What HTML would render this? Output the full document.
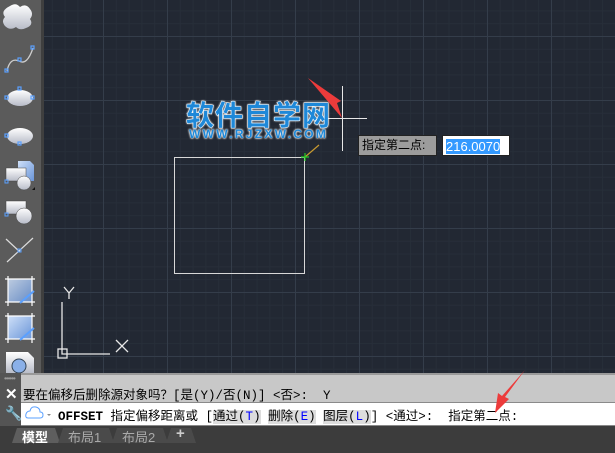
<!DOCTYPE html>
<html><head><meta charset="utf-8"><style>
*{margin:0;padding:0;box-sizing:border-box}
body{width:615px;height:453px;overflow:hidden;position:relative;background:#222833;font-family:"Liberation Sans","Noto Sans CJK SC",sans-serif}
#canvas{position:absolute;left:44px;top:0;width:571px;height:373px;background-color:#222833;
background-image:
linear-gradient(to right,#343d4a 1px,transparent 1px),
linear-gradient(to bottom,#343d4a 1px,transparent 1px),
linear-gradient(to right,#272e39 1px,transparent 1px),
linear-gradient(to bottom,#272e39 1px,transparent 1px);
background-size:64px 64px,64px 64px,12.8px 12.8px,12.8px 12.8px;
background-position:59px 36px,59px 36px,59px 36px,59px 36px}
#tb{position:absolute;left:0;top:0;width:44px;height:373px;background:#5b5b5b;border-right:3px solid #3f3f3f}
.cmd{position:absolute;left:0;width:615px}
.t{position:absolute;white-space:nowrap}
.m{font-family:"Liberation Mono","Noto Sans CJK SC",monospace;font-size:12.5px;color:#000}
</style></head><body>
<div id="canvas"></div>
<div id="tb">
<svg width="41" height="373" viewBox="0 0 41 373">
<defs><linearGradient id="g" x1="0" y1="0" x2="0" y2="1"><stop offset="0" stop-color="#fff"/><stop offset="1" stop-color="#b8bcc8"/></linearGradient>
<linearGradient id="b" x1="0" y1="0" x2="1" y2="1"><stop offset="0" stop-color="#cfe0f8"/><stop offset="1" stop-color="#6a95d8"/></linearGradient></defs>
<path d="M10 6 q6-4 10 1 q6-4 10 2 q4 5 0 10 q4 6-4 9 q-6 3-10-1 q-6 4-11-1 q-4-5 0-9 q-5-6 5-11z" fill="url(#g)"/>
<path d="M7 71 q3-14 12-10 q8 5 14-13" stroke="#ccc" fill="none" stroke-width="1.3"/>
<g fill="none" stroke="#5aa0ff" stroke-width="1.2"><rect x="5" y="69" width="3" height="3"/><rect x="18" y="58" width="3" height="3"/><rect x="31" y="46" width="3" height="3"/></g>
<ellipse cx="20" cy="98" rx="13" ry="8" fill="url(#g)"/>
<g fill="none" stroke="#5aa0ff" stroke-width="1.2"><rect x="5" y="96" width="3" height="3"/><rect x="18" y="87" width="3" height="3"/><rect x="31" y="96" width="3" height="3"/></g>
<ellipse cx="20" cy="136" rx="13" ry="8" fill="url(#g)"/>
<g fill="none" stroke="#5aa0ff" stroke-width="1.2"><rect x="5" y="134" width="3" height="3"/><rect x="18" y="142" width="3" height="3"/></g>
<path d="M18 161h12l4 4v16h-16z" fill="url(#b)"/>
<rect x="6" y="168" width="20" height="13" fill="url(#g)" stroke="#444" stroke-width=".5"/>
<circle cx="24" cy="183" r="7" fill="url(#g)" stroke="#444" stroke-width=".5"/>
<rect x="5" y="180" width="3" height="3" fill="none" stroke="#5aa0ff"/>
<path d="M32 190l3-3v3z" fill="#111"/>
<rect x="6" y="201" width="20" height="13" fill="url(#g)" stroke="#444" stroke-width=".5"/>
<circle cx="24" cy="216" r="8" fill="url(#g)" stroke="#444" stroke-width=".5"/>
<rect x="5" y="213" width="3" height="3" fill="none" stroke="#5aa0ff"/>
<path d="M7 262l26-24" stroke="#ddd" stroke-width="1.2"/><path d="M6 239l14 13" stroke="#ddd" stroke-width="1.2"/>
<rect x="18" y="249" width="3" height="3" fill="none" stroke="#5aa0ff"/>
<rect x="8" y="279" width="24" height="23" fill="url(#b)" opacity=".85"/>
<path d="M5 279h30M5 302h30M8 276v30M32 276v30" stroke="#fff" stroke-width="1.2"/><path d="M20 303l14-12" stroke="#5aa0ff" stroke-width="2"/>
<rect x="8" y="316" width="24" height="23" fill="url(#b)"/>
<path d="M5 316h30M5 339h30M8 313v30M32 313v30" stroke="#fff" stroke-width="1.2"/><path d="M20 340l14-12" stroke="#5aa0ff" stroke-width="2"/>
<path d="M6 352h22l6 6v15h-28z" fill="url(#g)"/><circle cx="19" cy="366" r="7" fill="#8ab0e8" stroke="#345"/>
</svg></div>

<svg style="position:absolute;left:0;top:0" width="615" height="373">
<rect x="174.5" y="157.5" width="130" height="116" fill="none" stroke="#d8d8d8"/>
<path d="M305 157l14-12" stroke="#c89a30" stroke-width="1.2"/>
<path d="M301 157h8M305 153v8" stroke="#2c2" stroke-width="1.2"/>
<path d="M342.5 86v65M318 118.5h49" stroke="#e8e8e8"/>
<path d="M62 302v52h48" stroke="#e8e8e8" stroke-width="1.3" fill="none"/>
<rect x="58" y="349" width="9" height="9" fill="none" stroke="#e8e8e8" stroke-width="1.3"/>
<path d="M64 287l5 6 5-6M69 293v6M116 340l12 12M128 340l-12 12" stroke="#e8e8e8" stroke-width="1.3" fill="none"/>
<path d="M308 78l34 40-5-15 4-2z" fill="#ec3b3b"/>
</svg>
<div class="t" style="left:186px;top:94px;font-size:28px;font-weight:bold;color:#1e88d8;letter-spacing:1px;-webkit-text-stroke:1px #fff;paint-order:stroke fill;text-shadow:0 0 2px #fff,0 0 2px #fff">软件自学网</div>
<div class="t" style="left:189px;top:127px;font-size:12px;font-weight:bold;color:#1e88d8;letter-spacing:2.3px;text-shadow:0 0 2px #fff,0 0 2px #fff,0 0 1px #fff">WWW.RJZXW.COM</div>
<div class="t" style="left:358px;top:135px;width:79px;height:21px;background:#9c9c9c;border:1px solid #222;font-size:12px;line-height:19px;padding-left:3px;color:#000">指定第二点:</div>
<div class="t" style="left:442px;top:135px;width:68px;height:21px;background:#fff;border:1px solid #222;padding:2px 3px"><span style="background:#3399ff;color:#fff;font-size:13px;line-height:15px;display:inline-block">216.0070</span></div>

<div class="cmd" style="top:373px;height:30px;background:#c8c8c8;border-top:2px solid #999"></div>
<div class="cmd" style="top:402px;height:1px;background:#8a8a8a"></div>
<div class="cmd" style="top:403px;height:22px;background:#fff"></div>
<div class="cmd" style="top:425px;height:28px;background:#3c3c3c;border-top:1px solid #888"></div>
<div class="t" style="left:0;top:373px;width:21px;height:53px;background:#545454"></div>
<div class="t" style="left:4px;top:374px;color:#999;font-size:8px;letter-spacing:-1px">••••••</div>
<div class="t" style="left:5px;top:385px;color:#fff;font-size:15px;font-weight:bold">✕</div>
<div class="t" style="left:5px;top:405px;color:#fff;font-size:14px">🔧</div>
<div class="t m" style="left:23px;top:384px">要在偏移后删除源对象吗？[是(Y)/否(N)] &lt;否&gt;:&nbsp; Y</div>
<svg class="t" style="left:25px;top:405px" width="30" height="16"><path d="M3 13 q-3 0 -2-4 q1-3 4-3 q1-5 6-4 q4 1 4 5 q3 0 3 3 q0 3-3 3z" fill="none" stroke="#5aa0ff"/><path d="M22 9l2 2 2-2z" fill="#888"/></svg>
<div class="t m" style="left:58px;top:405px"><b>OFFSET</b> 指定偏移距离或 [<span style="background:#ddd">通过(<span style="color:#00f">T</span>)</span> <span style="background:#ddd">删除(<span style="color:#00f">E</span>)</span> <span style="background:#ddd">图层(<span style="color:#00f">L</span>)</span>] &lt;通过&gt;:&nbsp; 指定第二点:</div>
<svg style="position:absolute;left:490px;top:368px" width="40" height="50"><path d="M35 2L12 28l-4-3-3 20 14-14-4-2z" fill="#ec3b3b"/></svg>
<svg style="position:absolute;left:0;top:426px" width="200" height="18">
<path d="M12 17l5-15h38l5 15z" fill="#5e5e5e"/>
<path d="M58 17l5-15h46l5 15z" fill="#4a4a4a"/>
<path d="M112 17l5-15h46l5 15z" fill="#4a4a4a"/>
<path d="M166 17l5-15h20l5 15z" fill="#4a4a4a"/>
</svg>
<div class="t" style="left:22px;top:427px;font-size:13px;color:#fff;font-weight:bold">模型</div>
<div class="t" style="left:68px;top:427px;font-size:13px;color:#aaa">布局1</div>
<div class="t" style="left:122px;top:427px;font-size:13px;color:#aaa">布局2</div>
<div class="t" style="left:176px;top:425px;font-size:15px;color:#ccc;font-weight:bold">+</div>
</body></html>
